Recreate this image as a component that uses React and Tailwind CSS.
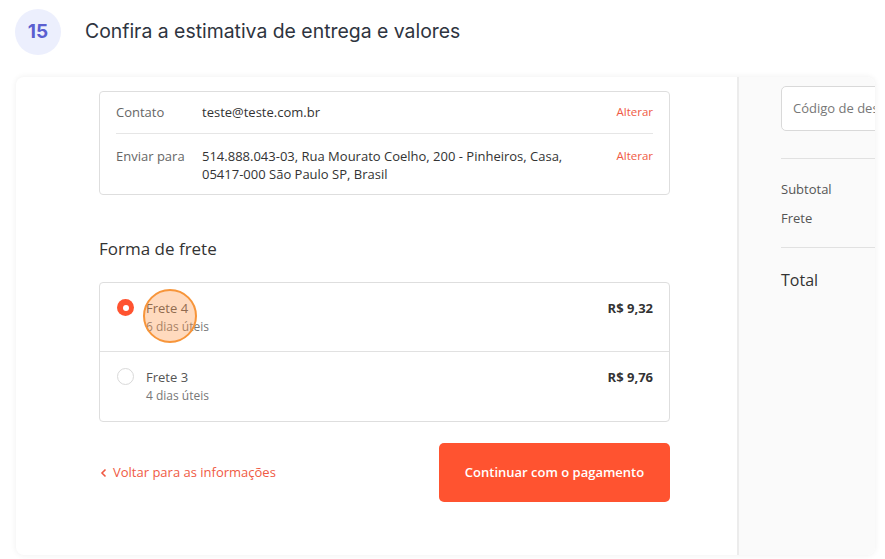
const Radio = ({ checked }) =>
  checked ? (
    <span className="flex h-[17px] w-[17px] shrink-0 items-center justify-center rounded-full bg-[#ff5330]">
      <span className="h-[6px] w-[6px] rounded-full bg-white" />
    </span>
  ) : (
    <span className="h-[17px] w-[17px] shrink-0 rounded-full border border-[#d9d9d9] bg-white" />
  );

const ShippingRow = ({ name, days, price, checked, last, children }) => (
  <div
    className={
      "relative flex items-start pl-[17px] pr-[16px] pt-[16px] pb-[15px] " +
      (last ? "pb-[16px]" : "border-b border-[#e1e1e1]")
    }
  >
    <Radio checked={checked} />
    <div className="ml-[12px] flex-1">
      <p className="text-[13px] leading-[18px] text-[#555]">{name}</p>
      <p className="mt-[1px] text-[12px] leading-[18px] text-[#777]">{days}</p>
    </div>
    <p className="text-[13px] font-bold leading-[18px] text-[#333]">{price}</p>
    {children}
  </div>
);

export default function App() {
  return (
    <div className="h-[559px] w-[885px] overflow-hidden bg-white font-['Open_Sans',sans-serif]">
      <div className="flex items-center pl-[15px] pt-[9px]">
        <div className="flex h-[46px] w-[46px] items-center justify-center rounded-full bg-[#eceffd] font-['Inter',sans-serif] text-[19px] font-bold text-[#5b5fd0]">
          15
        </div>
        <h1 className="ml-[24px] font-['Inter',sans-serif] text-[19.4px] text-[#2e3440]">
          Confira a estimativa de entrega e valores
        </h1>
      </div>

      <div className="ml-[16px] mt-[22px] flex h-[478px] w-[859px] overflow-hidden rounded-[8px] bg-white shadow-[0_0_6px_rgba(0,0,0,0.07)]">
        {/* left pane */}
        <div className="w-[721px] shrink-0 pl-[83px] pt-[14px]">
          <div className="w-[571px]">
            <div className="rounded-[4px] border border-[#dedede] px-[16px]">
              <div className="flex items-center border-b border-[#e6e6e6] pb-[12px] pt-[11px] text-[13px] leading-[18px]">
                <span className="w-[86px] shrink-0 text-[#666]">Contato</span>
                <span className="flex-1 text-[#333]">teste@teste.com.br</span>
                <span className="text-[11.5px] text-[#f05a44]">Alterar</span>
              </div>
              <div className="flex items-start pb-[11px] pt-[13px] text-[13px] leading-[18px]">
                <span className="w-[86px] shrink-0 text-[#666]">Enviar para</span>
                <span className="flex-1 text-[#333]">
                  514.888.043-03, Rua Mourato Coelho, 200 - Pinheiros, Casa,
                  <br />
                  05417-000 São Paulo SP, Brasil
                </span>
                <span className="text-[11.5px] text-[#f05a44]">Alterar</span>
              </div>
            </div>

            <h2 className="mt-[42px] text-[17px] leading-[24px] text-[#333]">Forma de frete</h2>

            <div className="mt-[21px] rounded-[4px] border border-[#dedede]">
              <ShippingRow name="Frete 4" days="6 dias úteis" price="R$ 9,32" checked>
                <span className="absolute left-[43px] top-[6px] h-[54px] w-[54px] rounded-full border-2 border-[#f7953a] bg-[rgba(255,150,70,0.35)]" />
              </ShippingRow>
              <ShippingRow name="Frete 3" days="4 dias úteis" price="R$ 9,76" last />
            </div>

            <div className="mt-[21px] flex items-center justify-between">
              <a className="flex items-center gap-[5px] pl-[1px] text-[13px] text-[#f05a44]">
                <svg width="8" height="10" viewBox="0 0 8 10" fill="none">
                  <path d="M5.5 1.5 2 5l3.5 3.5" stroke="#f05a44" strokeWidth="1.6" />
                </svg>
                Voltar para as informações
              </a>
              <button className="h-[59px] w-[231px] rounded-[5px] bg-[#ff5330] text-[13px] font-semibold text-white">
                Continuar com o pagamento
              </button>
            </div>
          </div>
        </div>

        {/* right pane */}
        <div className="flex-1 overflow-hidden border-l-2 border-[#ececec] bg-[#fafafa] pl-[42px] pt-[9px]">
          <div className="flex h-[45px] w-[300px] items-center rounded-[5px] border border-[#d9d9d9] bg-white pl-[11px] text-[13px] whitespace-nowrap text-[#777]">
            Código de desconto
          </div>
          <div className="mt-[27px] w-[300px] border-t border-[#e1e1e1] pb-[20px] pt-[21px] text-[13px] leading-[18px] text-[#555]">
            <p>Subtotal</p>
            <p className="mt-[11px]">Frete</p>
          </div>
          <div className="w-[300px] border-t border-[#e1e1e1] pt-[21px] text-[16px] leading-[22px] text-[#333]">
            Total
          </div>
        </div>
      </div>
    </div>
  );
}
